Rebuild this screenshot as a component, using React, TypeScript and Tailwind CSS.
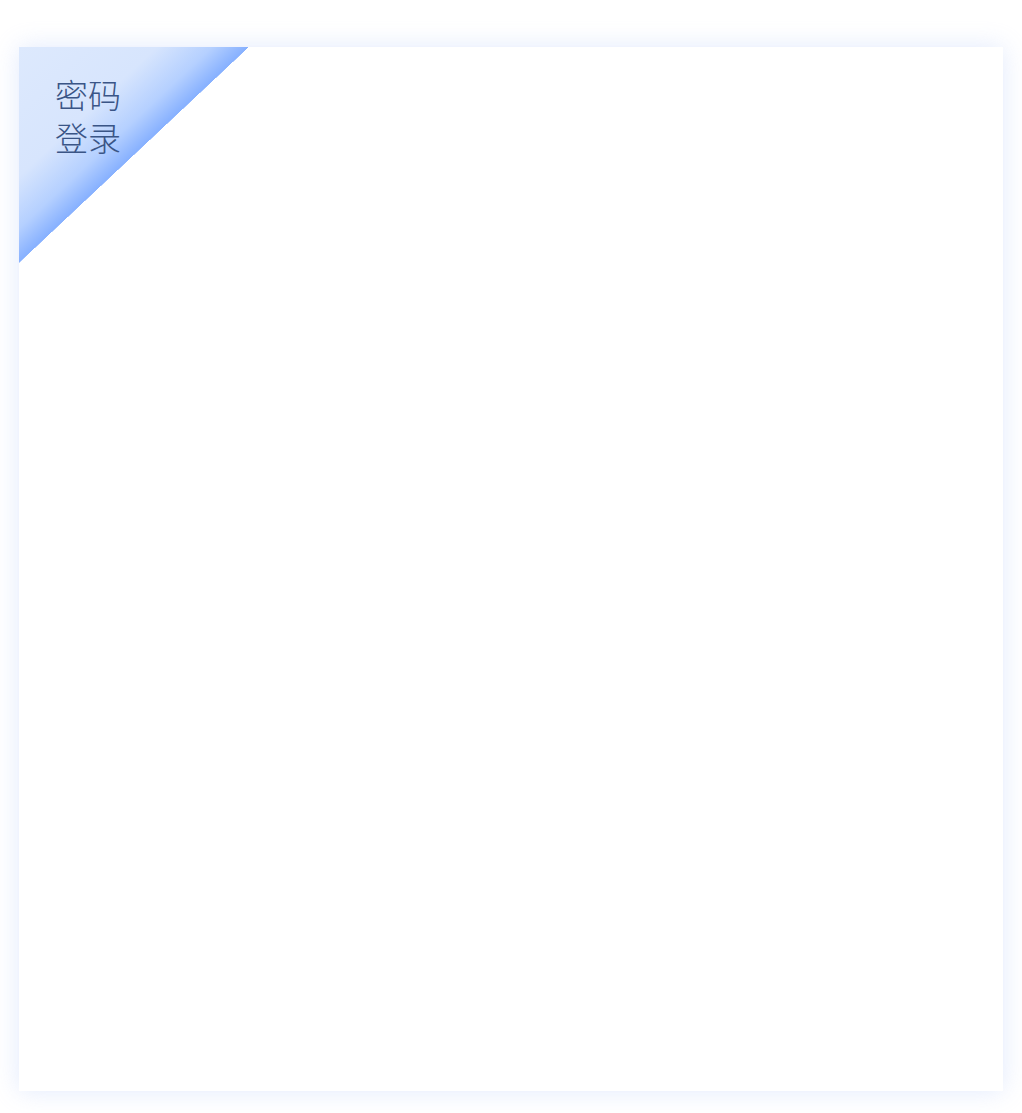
// Password login card with gradient corner tab

export default function App() {
  return (
    <div className="min-h-[1113px] w-[1022px] bg-white pt-[47px] pl-[19px]">
      <div className="relative h-[1044px] w-[984px] bg-white shadow-[0_0_24px_rgba(190,208,250,0.45)]">
        {/* corner ribbon */}
        <div className="absolute left-0 top-0 h-[216px] w-[230px] [clip-path:polygon(0_0,100%_0,0_100%)] bg-[linear-gradient(to_bottom_right,#dde9fd_0%,#d7e5fd_30%,#b5d0ff_42%,#86b0ff_50%,#ffffff_50%)]" />
        <p className="absolute left-[36px] top-[26px] w-[68px] break-all font-['Noto_Sans_CJK_SC',sans-serif] text-[33px] font-light leading-[43px] text-[#3a5586]">
          密码登录
        </p>
      </div>
    </div>
  )
}
